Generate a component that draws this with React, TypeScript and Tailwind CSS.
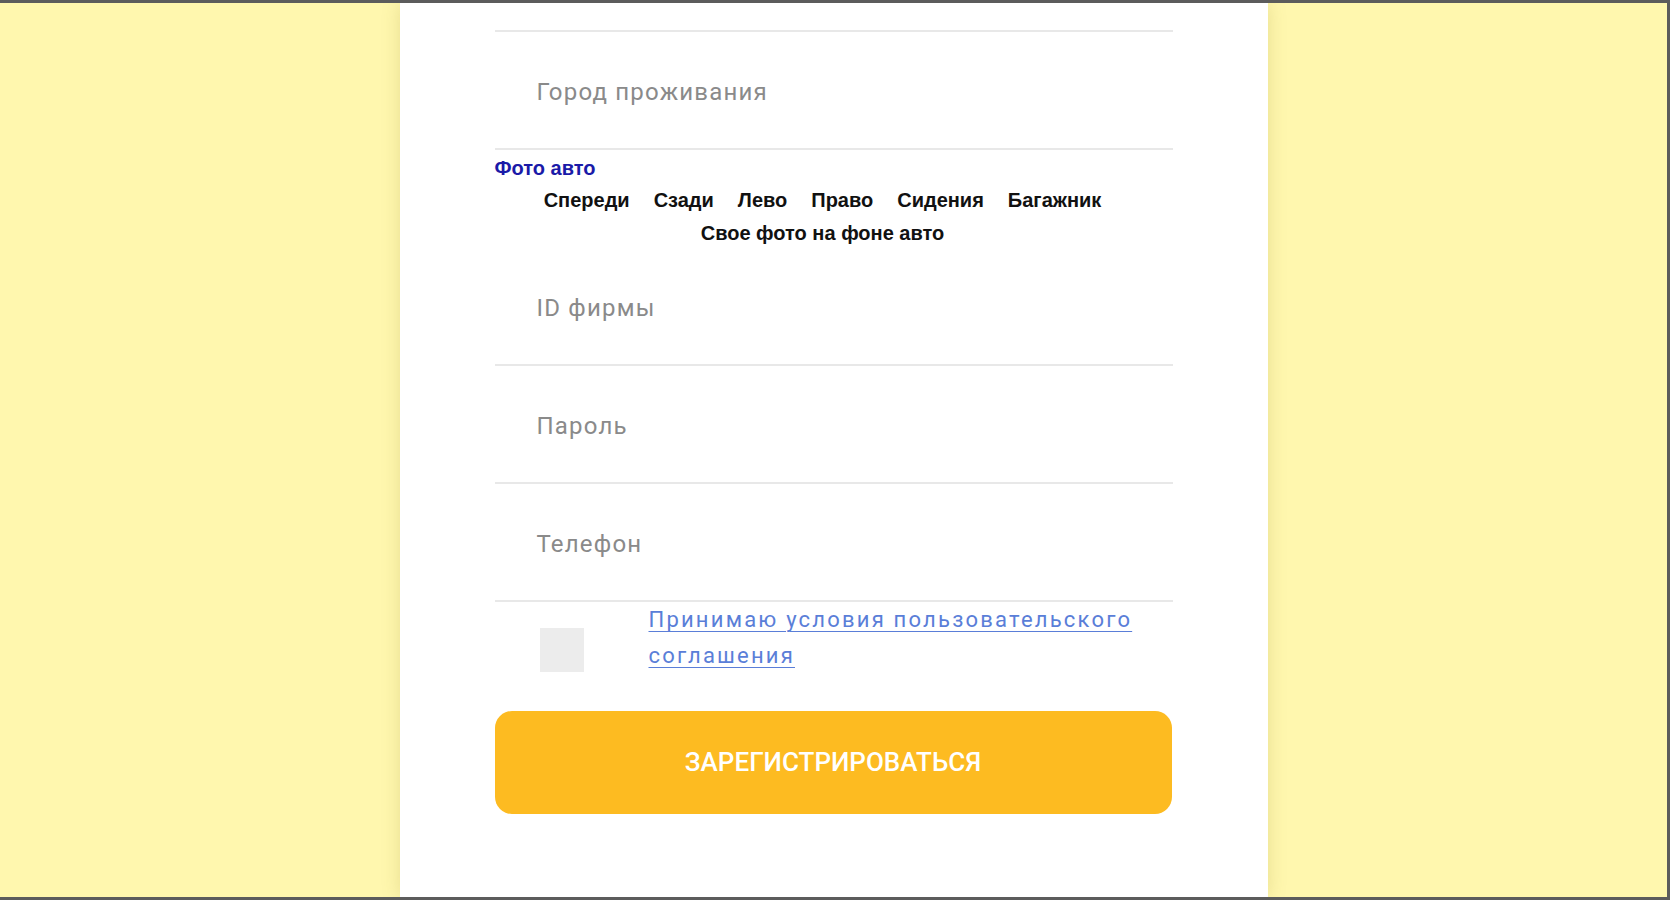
import React from "react";

const roboto = { fontFamily: "Roboto, 'Noto Sans', sans-serif" };

function InputRow({ label }: { label: string }) {
  return (
    <div className="flex h-[118px] items-center border-b-2 border-[#e8e8e8] pl-[42px]">
      <span
        className="pt-[3px] text-[24px] tracking-[1.2px] text-[#8a8a8a]"
        style={roboto}
      >
        {label}
      </span>
    </div>
  );
}

export default function App() {
  const tabs = ["Спереди", "Сзади", "Лево", "Право", "Сидения", "Багажник", "Свое фото на фоне авто"];
  return (
    <div className="flex h-[900px] w-[1670px] overflow-hidden border-t-[3px] border-r-[3px] border-b-[3px] border-[#5c5c5c] bg-[#fff7ae]">
      <div className="mx-auto flex h-full w-[868px] flex-col bg-white shadow-[0_0_18px_rgba(120,110,0,0.18)]">
        <div className="mx-auto flex w-[678px] flex-col">
          <div className="h-[29px] border-b-2 border-[#e8e8e8]" />
          <InputRow label="Город проживания" />
          <div
            className="flex h-[98px] flex-col pt-[6px]"
            style={{ fontFamily: "'Liberation Sans', Arial, sans-serif" }}
          >
            <div className="text-[20px] font-bold leading-[24px] text-[#1a1aa8]">Фото авто</div>
            <div className="mr-[22px] mt-[4px] flex flex-wrap justify-center gap-x-[24px] text-[20px] font-bold leading-[33px] text-[#111]">
              {tabs.map((t) => (
                <span key={t}>{t}</span>
              ))}
            </div>
          </div>
          <InputRow label="ID фирмы" />
          <InputRow label="Пароль" />
          <InputRow label="Телефон" />
          <div className="flex items-start pl-[45px]">
            <div className="mt-[26px] h-[44px] w-[44px] shrink-0 bg-[#ececec]" />
            <a
              href="#"
              className="ml-[65px] text-[22px] leading-[36px] tracking-[2.2px] text-[#5a7ed8] underline decoration-1 underline-offset-4"
              style={roboto}
            >
              Принимаю условия пользовательского соглашения
            </a>
          </div>
          <button
            className="mt-[37px] flex h-[103px] w-[677px] items-center justify-center rounded-[17px] bg-[#fdbb21] text-[26px] font-medium uppercase text-white"
            style={roboto}
          >
            Зарегистрироваться
          </button>
        </div>
      </div>
    </div>
  );
}
